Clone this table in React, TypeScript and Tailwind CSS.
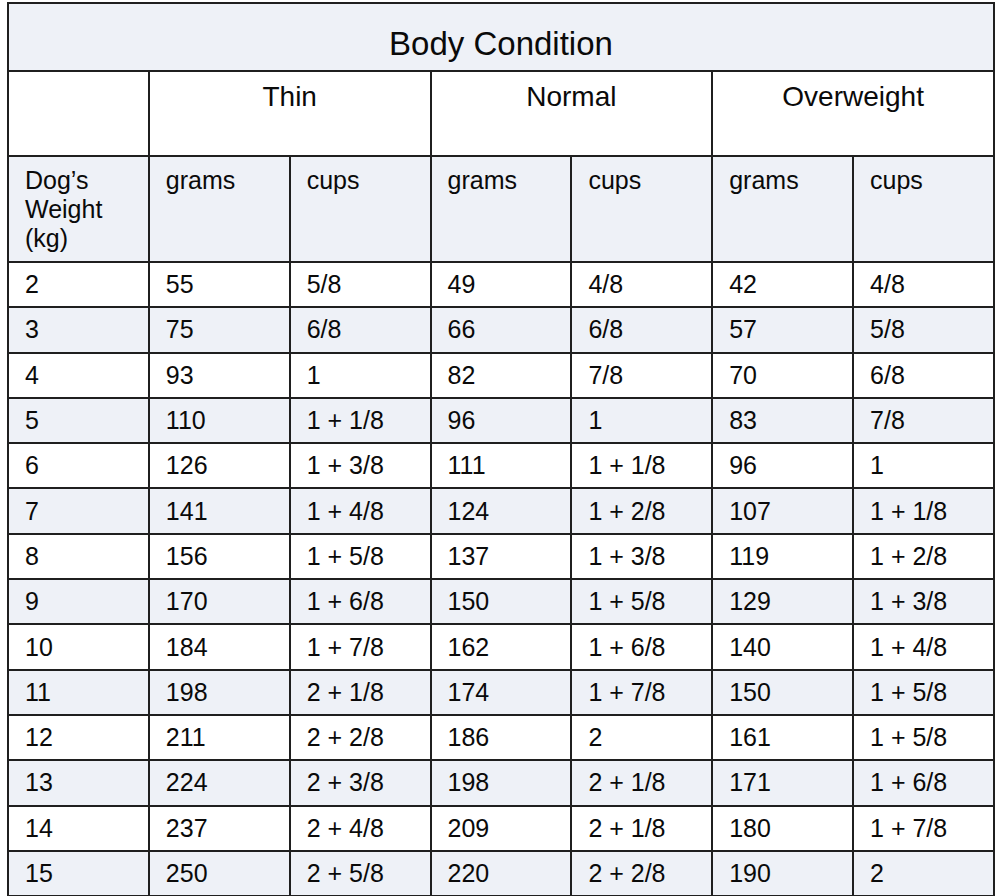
import React from "react";

type Row = [number, number, string, number, string, number, string];

const rows: Row[] = [
  [2, 55, "5/8", 49, "4/8", 42, "4/8"],
  [3, 75, "6/8", 66, "6/8", 57, "5/8"],
  [4, 93, "1", 82, "7/8", 70, "6/8"],
  [5, 110, "1 + 1/8", 96, "1", 83, "7/8"],
  [6, 126, "1 + 3/8", 111, "1 + 1/8", 96, "1"],
  [7, 141, "1 + 4/8", 124, "1 + 2/8", 107, "1 + 1/8"],
  [8, 156, "1 + 5/8", 137, "1 + 3/8", 119, "1 + 2/8"],
  [9, 170, "1 + 6/8", 150, "1 + 5/8", 129, "1 + 3/8"],
  [10, 184, "1 + 7/8", 162, "1 + 6/8", 140, "1 + 4/8"],
  [11, 198, "2 + 1/8", 174, "1 + 7/8", 150, "1 + 5/8"],
  [12, 211, "2 + 2/8", 186, "2", 161, "1 + 5/8"],
  [13, 224, "2 + 3/8", 198, "2 + 1/8", 171, "1 + 6/8"],
  [14, 237, "2 + 4/8", 209, "2 + 1/8", 180, "1 + 7/8"],
  [15, 250, "2 + 5/8", 220, "2 + 2/8", 190, "2"],
];

const cell = "border-2 border-[#1f1f1f] px-4";

const App = () => {
  return (
    <div className="min-h-screen bg-white pt-[2px] pl-[7px] font-['Liberation_Sans',Arial,sans-serif] text-[#0a0a0a]">
      <table className="w-[988px] table-fixed border-collapse text-[25px] leading-[29px]">
        <tbody>
          <tr className="h-[68px] bg-[#eef1f7]">
            <td colSpan={7} className={`${cell} pt-[22px] align-top text-center text-[33px] leading-[36px]`}>
              Body Condition
            </td>
          </tr>
          <tr className="h-[85px] bg-white">
            <td className={cell}></td>
            {["Thin", "Normal", "Overweight"].map((label) => (
              <td
                key={label}
                colSpan={2}
                className={`${cell} pt-[9px] align-top text-center text-[28px] leading-[32px]`}
              >
                {label}
              </td>
            ))}
          </tr>
          <tr className="h-[106px] bg-[#eef1f7]">
            <td className={`${cell} pt-[9px] pb-[7px] align-top`}>
              Dog’s
              <br />
              Weight
              <br />
              (kg)
            </td>
            {["grams", "cups", "grams", "cups", "grams", "cups"].map((h, i) => (
              <td key={i} className={`${cell} pt-[9px] align-top`}>
                {h}
              </td>
            ))}
          </tr>
          {rows.map((row, i) => (
            <tr
              key={row[0]}
              className={`h-[45.3px] ${i % 2 === 0 ? "bg-white" : "bg-[#eef1f7]"}`}
            >
              {row.map((v, j) => (
                <td key={j} className={`${cell} py-0 align-middle`}>
                  {v}
                </td>
              ))}
            </tr>
          ))}
        </tbody>
      </table>
    </div>
  );
};

export default App;
